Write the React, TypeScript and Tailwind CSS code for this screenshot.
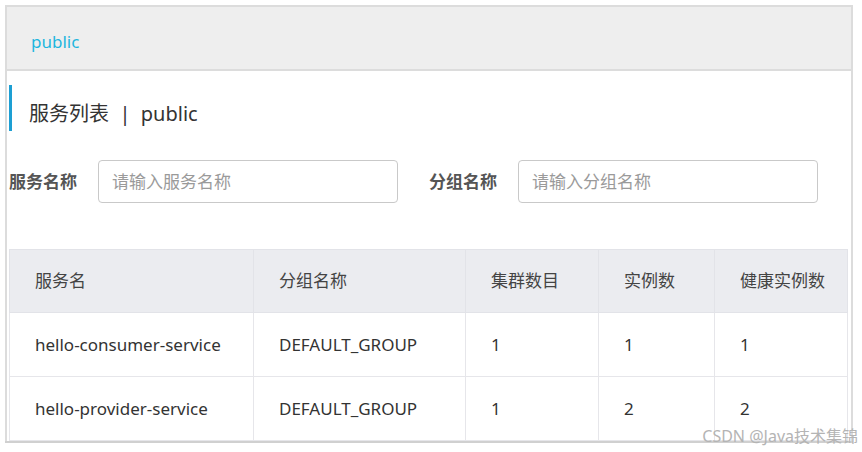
const ROWS = [
  { name: 'hello-consumer-service', group: 'DEFAULT_GROUP', clusters: 1, instances: 1, healthy: 1 },
  { name: 'hello-provider-service', group: 'DEFAULT_GROUP', clusters: 1, instances: 2, healthy: 2 },
]

const COLS = ['服务名', '分组名称', '集群数目', '实例数', '健康实例数']
const WIDTHS = ['w-[244px]', 'w-[212px]', 'w-[133px]', 'w-[116px]', 'w-[133px]']

export default function App() {
  return (
    <div
      className="relative w-[862px] h-[452px] bg-white pt-[5px] pl-[5px]"
      style={{ fontFamily: '"Noto Sans", "Noto Sans CJK SC", sans-serif' }}
    >
      <div className="w-[848px] h-[436px] border-2 border-[#dcdcdc] border-b-0 flex flex-col">
        <div className="h-[64px] bg-[#eeeeee] border-b-2 border-[#dcdcdc] flex items-center pl-[24px] pt-[7px]">
          <span className="text-[17px] text-[#1fb6de]">public</span>
        </div>

        <div className="pl-[2px] pt-[14px]">
          <div className="flex items-center h-[46px] border-l-[3px] border-[#1d9fd3]">
            <span className="ml-[17px] pt-[12px] text-[20px] text-[#333]">服务列表 &nbsp;|&nbsp; public</span>
          </div>

          <div className="flex items-center mt-[29px] h-[43px]">
            <label className="text-[17px] font-bold text-[#555] w-[89px]">服务名称</label>
            <input
              className="w-[300px] h-[43px] border border-[#c9c9c9] rounded-[4px] px-[13px] text-[17px] placeholder:text-[#9a9a9a] outline-none"
              placeholder="请输入服务名称"
            />
            <label className="ml-[31px] text-[17px] font-bold text-[#555] w-[89px]">分组名称</label>
            <input
              className="w-[300px] h-[43px] border border-[#c9c9c9] rounded-[4px] px-[13px] text-[17px] placeholder:text-[#9a9a9a] outline-none"
              placeholder="请输入分组名称"
            />
          </div>

          <table className="mt-[46px] border-collapse text-[17px] text-[#333] border border-[#e4e4e8]">
            <thead>
              <tr className="h-[63px] bg-[#ebecf0]">
                {COLS.map((c, i) => (
                  <th
                    key={c}
                    className={`${WIDTHS[i]} text-left font-normal pl-[25px] border border-[#e2e3e8] text-[#444]`}
                  >
                    {c}
                  </th>
                ))}
              </tr>
            </thead>
            <tbody>
              {ROWS.map((r) => (
                <tr key={r.name} className="h-[64px]">
                  <td className="pl-[25px] border border-[#e6e6ea]">{r.name}</td>
                  <td className="pl-[25px] border border-[#e6e6ea]">{r.group}</td>
                  <td className="pl-[25px] border border-[#e6e6ea]">{r.clusters}</td>
                  <td className="pl-[25px] border border-[#e6e6ea]">{r.instances}</td>
                  <td className="pl-[25px] border border-[#e6e6ea]">{r.healthy}</td>
                </tr>
              ))}
            </tbody>
          </table>
        </div>
      </div>
      <div className="w-[848px] h-[2px] bg-[#d0d0d0]" />

      <span className="absolute right-[4px] bottom-[4px] text-[16px] text-[#b4b4b4]">
        CSDN @Java技术集锦
      </span>
    </div>
  )
}
